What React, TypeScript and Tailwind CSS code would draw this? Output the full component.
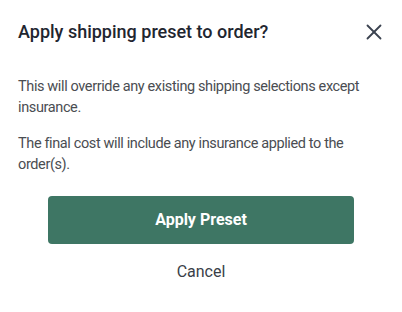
import { X } from "lucide-react";

export default function App() {
  return (
    <div className="w-[402px] h-[312px] bg-white font-['Roboto',sans-serif] px-[18px] pt-[18px]">
      <div className="flex items-center justify-between">
        <h2 className="text-[18px] leading-[28px] font-medium text-[#1f2630]">
          Apply shipping preset to order?
        </h2>
        <button className="-mr-[3px] text-[#3b4350]">
          <X size={26} strokeWidth={1.7} />
        </button>
      </div>
      <div className="mt-[30px] text-[14.5px] tracking-[-0.38px] leading-[21px] text-[#4a4d52]">
        <p>This will override any existing shipping selections except insurance.</p>
        <p className="mt-[15px]">
          The final cost will include any insurance applied to the order(s).
        </p>
      </div>
      <div className="flex flex-col items-center mt-[21px]">
        <button className="w-[306px] h-[48px] rounded-[4px] bg-[#3e7664] text-white text-[16px] font-bold">
          Apply Preset
        </button>
        <button className="mt-[16px] text-[16px] text-[#3a3f48]">Cancel</button>
      </div>
    </div>
  );
}
